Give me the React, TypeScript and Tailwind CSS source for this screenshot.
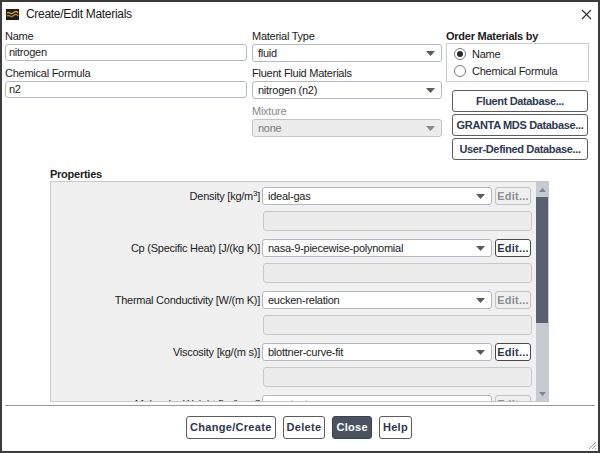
import { useState } from "react";

function Caret({ color = "#5a5a5a" }: { color?: string }) {
  return (
    <svg width="9" height="5" viewBox="0 0 9 5" className="shrink-0">
      <path d="M0 0 L9 0 L4.5 5 Z" fill={color} />
    </svg>
  );
}

function Select({ value, disabled = false, w }: { value: string; disabled?: boolean; w: string }) {
  return (
    <div
      className={`${w} h-[18px] flex items-center justify-between pl-[5px] pr-[6px] rounded-[3px] border ${
        disabled ? "bg-[#ececec] border-[#c4c4c4] text-[#7a7a7a]" : "bg-white border-[#b4b8c0] text-[#1c1c1c]"
      }`}
    >
      <span className="whitespace-nowrap">{value}</span>
      <Caret color={disabled ? "#8a8a8a" : "#5a5a5a"} />
    </div>
  );
}

function TextInput({ value }: { value: string }) {
  return (
    <div className="w-full h-[17px] flex items-center px-[3px] rounded-[3px] border border-[#b4b8c0] bg-white text-[#1c1c1c]">
      {value}
    </div>
  );
}

function Radio({ checked, label }: { checked: boolean; label: string }) {
  return (
    <div className="flex items-center gap-[6px] h-[17px]">
      <span className="w-[12px] h-[12px] rounded-full border border-[#7c7c7c] bg-white flex items-center justify-center">
        {checked && <span className="w-[6px] h-[6px] rounded-full bg-[#2a2a2a]" />}
      </span>
      <span className="text-[#1c1c1c]">{label}</span>
    </div>
  );
}

function DbButton({ label }: { label: string }) {
  return (
    <button className="w-[136px] h-[22px] px-0 rounded-[3px] border border-[#5c5c5c] bg-white font-bold text-[#2c3850] tracking-[-0.35px] whitespace-nowrap overflow-hidden">
      {label}
    </button>
  );
}

type Prop = { label: React.ReactNode; value: string; editable: boolean };

const props: Prop[] = [
  {
    label: (
      <>
        Density [kg/m<span className="text-[8px] align-[4px]">3</span>]
      </>
    ),
    value: "ideal-gas",
    editable: false,
  },
  { label: "Cp (Specific Heat) [J/(kg K)]", value: "nasa-9-piecewise-polynomial", editable: true },
  { label: "Thermal Conductivity [W/(m K)]", value: "eucken-relation", editable: false },
  { label: "Viscosity [kg/(m s)]", value: "blottner-curve-fit", editable: true },
  { label: "Molecular Weight [kg/kmol]", value: "constant", editable: false },
];

function PropRow({ p }: { p: Prop }) {
  return (
    <div className="flex flex-col h-[52px]">
      <div className="flex items-center h-[18px]">
        <div className="w-[211px] pr-[2px] text-right text-[#1c1c1c] whitespace-nowrap">{p.label}</div>
        <Select value={p.value} w="w-[230px]" />
        <button
          className={`ml-[3px] w-[36px] h-[18px] rounded-[3px] border font-bold tracking-[0.2px] ${
            p.editable ? "border-[#4a4a4a] bg-white text-[#2c3850]" : "border-[#c4c4c4] bg-[#f0f0f0] text-[#8a8e96]"
          }`}
        >
          Edit...
        </button>
      </div>
      <div className="ml-[212px] mt-[6px] w-[269px] h-[20px] rounded-[3px] border border-[#c8c8c8] bg-[#ececec]" />
    </div>
  );
}

function BottomButton({ label, primary = false }: { label: string; primary?: boolean }) {
  return (
    <button
      className={`h-[23px] px-[3px] rounded-[3px] border font-bold tracking-[0.3px] ${
        primary ? "bg-[#4b5362] border-[#3a404c] text-white" : "bg-white border-[#5c5c5c] text-[#2c3850]"
      }`}
    >
      {label}
    </button>
  );
}

export default function App() {
  const [order] = useState("name");

  return (
    <div className="w-[600px] h-[453px] bg-white border-2 border-[#3c3c3c] flex flex-col font-['Liberation_Sans',Arial,sans-serif] text-[11px] tracking-[-0.25px] overflow-hidden">
      {/* title bar */}
      <div className="h-[24px] flex items-center pl-[4px] pr-[6px] shrink-0">
        <svg width="13" height="11" viewBox="0 0 13 11" className="shrink-0">
          <rect width="13" height="11" fill="#1e1e1e" />
          <path d="M1 4 C3 2 5 6 7 4 S11 2 12 4" stroke="#d8a020" strokeWidth="1.3" fill="none" />
          <path d="M1 7 C3 5 5 9 7 7 S11 5 12 7" stroke="#c08818" strokeWidth="1.3" fill="none" />
        </svg>
        <span className="ml-[7px] text-[12px] tracking-[-0.3px] text-[#1a1a1a]">Create/Edit Materials</span>
        <svg width="11" height="11" viewBox="0 0 11 11" className="ml-auto">
          <path d="M1 1 L10 10 M10 1 L1 10" stroke="#333" strokeWidth="1.2" />
        </svg>
      </div>

      {/* top section */}
      <div className="flex pl-[3px] pt-[3px] shrink-0">
        <div className="w-[242px] flex flex-col">
          <div className="h-[14px] leading-[14px] text-[#1c1c1c]">Name</div>
          <div className="mt-[1px]">
            <TextInput value="nitrogen" />
          </div>
          <div className="mt-[5px] h-[14px] leading-[14px] text-[#1c1c1c]">Chemical Formula</div>
          <div className="mt-[1px]">
            <TextInput value="n2" />
          </div>
        </div>

        <div className="ml-[5px] w-[190px] flex flex-col">
          <div className="h-[14px] leading-[14px] text-[#1c1c1c]">Material Type</div>
          <div className="mt-[1px]">
            <Select value="fluid" w="w-[190px]" />
          </div>
          <div className="mt-[4px] h-[14px] leading-[14px] text-[#1c1c1c]">Fluent Fluid Materials</div>
          <div className="mt-[1px]">
            <Select value="nitrogen (n2)" w="w-[190px]" />
          </div>
          <div className="mt-[5px] h-[14px] leading-[14px] text-[#8a8a8a]">Mixture</div>
          <div className="mt-[1px]">
            <Select value="none" w="w-[190px]" disabled />
          </div>
        </div>

        <div className="ml-[4px] w-[143px] flex flex-col">
          <div className="h-[14px] leading-[14px] font-bold text-[#1c1c1c]">Order Materials by</div>
          <div className="h-[39px] border border-[#c8ccd4] flex flex-col justify-center pl-[7px]">
            <Radio checked={order === "name"} label="Name" />
            <Radio checked={order === "formula"} label="Chemical Formula" />
          </div>
          <div className="ml-[6px] mt-[8px] flex flex-col gap-[2px]">
            <DbButton label="Fluent Database..." />
            <DbButton label="GRANTA MDS Database..." />
            <DbButton label="User-Defined Database..." />
          </div>
        </div>
      </div>

      {/* properties */}
      <div className="ml-[48px] mt-[7px] shrink-0">
        <div className="h-[14px] leading-[14px] font-bold text-[#1c1c1c]">Properties</div>
        <div className="w-[499px] h-[221px] border border-[#c8c8c8] bg-[#f0f0f0] flex overflow-hidden">
          <div className="flex-1 pt-[5px] overflow-hidden">
            {props.map((p, i) => (
              <PropRow key={i} p={p} />
            ))}
          </div>
          <div className="w-[12px] flex flex-col bg-[#c5cbd0]">
            <div className="h-[15px] flex items-center justify-center">
              <svg width="7" height="4" viewBox="0 0 7 4">
                <path d="M0 4 L7 4 L3.5 0 Z" fill="#7b8290" />
              </svg>
            </div>
            <div className="h-[126px] bg-[#596170]" />
            <div className="flex-1" />
            <div className="h-[15px] flex items-center justify-center">
              <svg width="7" height="4" viewBox="0 0 7 4">
                <path d="M0 0 L7 0 L3.5 4 Z" fill="#7b8290" />
              </svg>
            </div>
          </div>
        </div>
      </div>

      {/* separator */}
      <div className="mx-[3px] mt-[3px] h-px bg-[#9a9a9a] shrink-0" />

      {/* bottom buttons */}
      <div className="flex justify-center gap-[7px] mt-[10px] pr-[2px]">
        <BottomButton label="Change/Create" />
        <BottomButton label="Delete" />
        <BottomButton label="Close" primary />
        <BottomButton label="Help" />
      </div>

      <div className="flex-1 relative">
        <svg width="10" height="10" viewBox="0 0 10 10" className="absolute right-[1px] bottom-[1px]">
          <path d="M9 2 L2 9 M9 5 L5 9 M9 8 L8 9" stroke="#a0a0a0" strokeWidth="1" />
        </svg>
      </div>
    </div>
  );
}
